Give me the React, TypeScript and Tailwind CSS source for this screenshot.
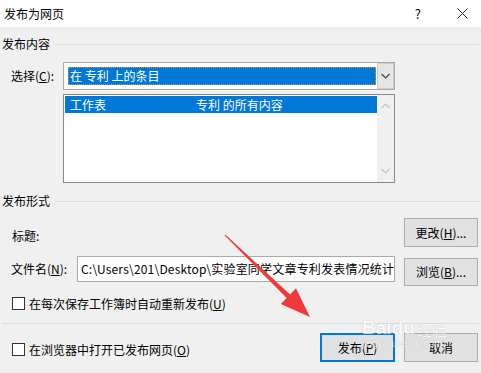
import React from 'react';

const Chevron = ({ dir, color }: { dir: 'up' | 'down'; color: string }) => (
  <svg width="9" height="6" viewBox="0 0 9 6" fill="none" stroke={color} strokeWidth="1.2">
    {dir === 'down' ? <polyline points="0.5,1 4.5,5 8.5,1" /> : <polyline points="0.5,5 4.5,1 8.5,5" />}
  </svg>
);

const Checkbox = ({ label, accel }: { label: string; accel: string }) => (
  <div className="flex items-center">
    <div className="w-[13px] h-[13px] border border-[#333333] bg-white ml-[10px]" />
    <span className="ml-[4px] leading-[13px]">
      {label}(<u>{accel}</u>)
    </span>
  </div>
);

const Button = ({ text, accel, dots, primary }: { text: string; accel?: string; dots?: boolean; primary?: boolean }) => (
  <div
    className={`flex items-center justify-center bg-[#e1e1e1] ${
      primary ? 'border-2 border-[#0078d7]' : 'border border-[#adadad]'
    } h-full`}
  >
    <span>
      {text}
      {accel && (
        <>
          (<u>{accel}</u>)
        </>
      )}
      {dots && '...'}
    </span>
  </div>
);

const GroupHeader = ({ title }: { title: string }) => (
  <div className="flex items-center h-[16px]">
    <span className="leading-[16px]">{title}</span>
    <div className="flex-1 h-px bg-[#dcdcdc] ml-[5px]" />
  </div>
);

export default function App() {
  return (
    <div className="relative w-[481px] h-[373px] overflow-hidden bg-[#f0f0f0] text-[12px] text-black font-[family-name:Noto_Sans_CJK_SC,sans-serif]">
      {/* title bar */}
      <div className="h-[27px] bg-white flex items-center pl-[4px]">
        <span className="text-[12px]">发布为网页</span>
        <span className="ml-auto mr-[36px] text-[13px]">?</span>
        <svg width="11" height="11" viewBox="0 0 11 11" stroke="#222" strokeWidth="1" className="mr-[13px]">
          <line x1="0.5" y1="0.5" x2="10.5" y2="10.5" />
          <line x1="10.5" y1="0.5" x2="0.5" y2="10.5" />
        </svg>
      </div>

      <div className="pl-[2px] pr-[2px]">
        <div className="mt-[9px]">
          <GroupHeader title="发布内容" />
        </div>

        {/* select */}
        <div className="mt-[10px] flex items-center h-[28px]">
          <span className="w-[61px] pl-[9px]">
            选择(<u>C</u>):
          </span>
          <div className="w-[332px] h-[28px] border border-[#a9a9a9] bg-white flex">
            <div className="flex-1 p-[4px] pr-[1px]">
              <div className="h-full bg-[#0078d7] border border-dotted border-[#d9913f] text-white flex items-center pl-[1px] leading-[14px]">
                在 专利 上的条目
              </div>
            </div>
            <div className="w-[17px] bg-[#e5e5e5] border border-[#cccccc] flex items-center justify-center">
              <Chevron dir="down" color="#444" />
            </div>
          </div>
        </div>

        {/* list */}
        <div className="mt-[4px] ml-[61px] w-[332px] h-[89px] border border-[#828790] bg-white flex">
          <div className="flex-1 pt-[1px] pl-[1px]">
            <div className="h-[17px] bg-[#0078d7] text-white flex items-center leading-[17px]">
              <span className="pl-[5px] w-[131px]">工作表</span>
              <span>专利 的所有内容</span>
            </div>
          </div>
          <div className="w-[17px] bg-[#f0f0f0] flex flex-col items-center justify-between py-[8px]">
            <Chevron dir="up" color="#c2c2c2" />
            <Chevron dir="down" color="#c2c2c2" />
          </div>
        </div>

        <div className="mt-[10px]">
          <GroupHeader title="发布形式" />
        </div>

        {/* title row */}
        <div className="mt-[9px] flex items-center h-[29px]">
          <span className="pl-[10px] pt-[6px]">标题:</span>
          <div className="ml-auto w-[74px] h-[29px] mr-[1px]">
            <Button text="更改" accel="H" dots />
          </div>
        </div>

        {/* file row */}
        <div className="mt-[9px] flex items-start h-[30px]">
          <div className="flex items-center h-[26px]">
            <span className="w-[75px] pl-[9px]">
              文件名(<u>N</u>):
            </span>
            <div className="w-[318px] h-[26px] border border-[#a9a9a9] bg-white flex items-center pl-[3px] overflow-hidden whitespace-nowrap tracking-[0.2px]">
              C:\Users\201\Desktop\实验室同学文章专利发表情况统计
            </div>
          </div>
          <div className="ml-auto mt-[2px] w-[74px] h-[28px] mr-[1px]">
            <Button text="浏览" accel="B" dots />
          </div>
        </div>

        <div className="mt-[11px]">
          <Checkbox label="在每次保存工作簿时自动重新发布" accel="U" />
        </div>

        <div className="mt-[13px] h-px bg-[#dcdcdc]" />

        {/* bottom row */}
        <div className="mt-[9px] flex items-center h-[29px]">
          <div className="pt-[3px]">
            <Checkbox label="在浏览器中打开已发布网页" accel="O" />
          </div>
          <div className="ml-auto flex gap-[9px] h-[29px] mr-[1px]">
            <div className="w-[75px]">
              <Button text="发布" accel="P" primary />
            </div>
            <div className="w-[74px]">
              <Button text="取消" />
            </div>
          </div>
        </div>
      </div>

      {/* watermark */}
      <div className="absolute left-[362px] top-[318px] pointer-events-none opacity-70 text-white [text-shadow:0_0_1px_#9a9a9a]">
        <div className="flex items-end leading-none">
          <span className="text-[19px] font-bold font-[family-name:Liberation_Sans,sans-serif]">Baidu</span>
          <span className="text-[15px] ml-[2px]">经验</span>
        </div>
        <div className="text-[10px] leading-none mt-[2px] font-[family-name:Liberation_Sans,sans-serif]">jingyan.baidu.com</div>
      </div>

      {/* red arrow */}
      <svg className="absolute inset-0 pointer-events-none" width="481" height="373" viewBox="0 0 481 373">
        <polygon
          fill="#f03a3a"
          points="224.7,235.4 286.7,298 280.8,304.1 310,317 296,288.3 290.1,294.4 225.3,234.6"
        />
      </svg>
    </div>
  );
}
